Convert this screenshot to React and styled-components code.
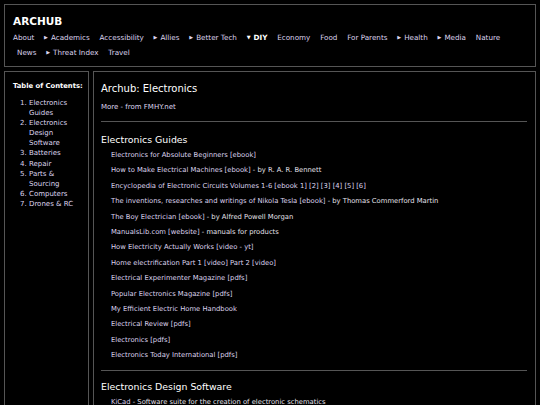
import React from 'react';
import styled, { createGlobalStyle } from 'styled-components';

const Global = createGlobalStyle`
  html, body { margin: 0; background: #000; }
  body {
    padding: 4px;
    font-family: "DejaVu Sans", Verdana, sans-serif;
    font-size: 7px;
    color: #e0d9ef;
    overflow: hidden;
    height: 405px;
    box-sizing: border-box;
  }
`;

const Header = styled.header`
  border: 1px solid #555;
  padding: 9px 8px 6px;
`;

const Brand = styled.h1`
  margin: 0 0 2px;
  font-size: 10.5px;
  font-weight: bold;
  color: #fff;
  line-height: 14px;
`;

const Nav = styled.nav`
  display: flex;
  flex-wrap: wrap;
  column-gap: 9.8px;
  font-size: 7.2px;
  line-height: 15px;
`;

const NavItem = styled.span`
  display: inline-flex;
  align-items: center;
  height: 15px;
  color: ${p => (p.$open ? '#fff' : '#ddd4ee')};
  font-weight: ${p => (p.$open ? 'bold' : 'normal')};
  padding-left: ${p => (p.$indent ? '4px' : '0')};
`;

const Caret = styled.span`
  font-size: 5px;
  line-height: 1;
  margin-right: 3px;
`;

const Body = styled.div`
  display: flex;
  gap: 4px;
  margin-top: 4px;
  height: 345px;
`;

const Sidebar = styled.aside`
  width: 85px;
  flex: none;
  border: 1px solid #555;
  padding: 9px 3px 8px 8px;
  box-sizing: border-box;
`;

const TocTitle = styled.div`
  font-weight: bold;
  font-size: 6.8px;
  color: #fff;
  line-height: 10px;
  margin-bottom: 7px;
  white-space: nowrap;
`;

const TocList = styled.ol`
  margin: 0;
  padding-left: 16px;
  padding-right: 3px;
  line-height: 10.1px;
  li { color: #ddd4ee; }
`;

const Main = styled.main`
  flex: 1;
  border: 1px solid #555;
  padding: 9px 8px 8px 7px;
  box-sizing: border-box;
`;

const Title = styled.h2`
  margin: 0;
  font-size: 10px;
  font-weight: normal;
  color: #fff;
  line-height: 16px;
`;

const More = styled.div`
  color: #ddd4ee;
  line-height: 12px;
  margin-top: 4px;
`;

const Rule = styled.hr`
  border: 0;
  border-top: 1px solid #555;
  margin: ${p => p.$m || '8px 0 10px'};
`;

const Section = styled.h3`
  margin: 0;
  font-size: 9.4px;
  font-weight: normal;
  color: #fff;
  line-height: 16px;
`;

const LinkList = styled.ul`
  list-style: none;
  margin: 0;
  padding-left: 10px;
  font-size: 6.8px;
`;

const LinkItem = styled.li`
  line-height: 15.4px;
  color: #ddd4ee;
  white-space: nowrap;
`;

const Plain = styled.span`
  color: #e4e0ea;
`;

const nav = [
  ['About'], ['Academics', 'c'], ['Accessibility'], ['Allies', 'c'], ['Better Tech', 'c'],
  ['DIY', 'o'], ['Economy'], ['Food'], ['For Parents'], ['Health', 'c'], ['Media', 'c'],
  ['Nature'], ['News', null, true], ['Threat Index', 'c'], ['Travel'],
];

const toc = [
  'Electronics Guides', 'Electronics Design Software', 'Batteries', 'Repair',
  'Parts & Sourcing', 'Computers', 'Drones & RC',
];

const guides = [
  ['Electronics for Absolute Beginners [ebook]'],
  ['How to Make Electrical Machines [ebook]', ' - by R. A. R. Bennett'],
  ['Encyclopedia of Electronic Circuits Volumes 1-6 [ebook 1] [2] [3] [4] [5] [6]'],
  ['The inventions, researches and writings of Nikola Tesla [ebook]', ' - by Thomas Commerford Martin'],
  ['The Boy Electrician [ebook]', ' - by Alfred Powell Morgan'],
  ['ManualsLib.com [website]', ' - manuals for products'],
  ['How Electricity Actually Works [video - yt]'],
  ['Home electrification Part 1 [video] Part 2 [video]'],
  ['Electrical Experimenter Magazine [pdfs]'],
  ['Popular Electronics Magazine [pdfs]'],
  ['My Efficient Electric Home Handbook'],
  ['Electrical Review [pdfs]'],
  ['Electronics [pdfs]'],
  ['Electronics Today International [pdfs]'],
];

export default function App() {
  return (
    <>
      <Global />
      <Header>
        <Brand>ARCHUB</Brand>
        <Nav>
          {nav.map(([label, kind, indent]) => (
            <NavItem key={label} $open={kind === 'o'} $indent={indent}>
              {kind === 'c' && <Caret>▶</Caret>}
              {kind === 'o' && <Caret>▼</Caret>}
              {label}
            </NavItem>
          ))}
        </Nav>
      </Header>
      <Body>
        <Sidebar>
          <TocTitle>Table of Contents:</TocTitle>
          <TocList>
            {toc.map(t => <li key={t}>{t}</li>)}
          </TocList>
        </Sidebar>
        <Main>
          <Title>Archub: Electronics</Title>
          <More>More - from FMHY.net</More>
          <Rule />
          <Section>Electronics Guides</Section>
          <LinkList>
            {guides.map(([link, note]) => (
              <LinkItem key={link}>
                {link}
                {note && <Plain>{note}</Plain>}
              </LinkItem>
            ))}
          </LinkList>
          <Rule $m="6px 0 8px" />
          <Section>Electronics Design Software</Section>
          <LinkList>
            <LinkItem>KiCad<Plain> - Software suite for the creation of electronic schematics</Plain></LinkItem>
          </LinkList>
        </Main>
      </Body>
    </>
  );
}
